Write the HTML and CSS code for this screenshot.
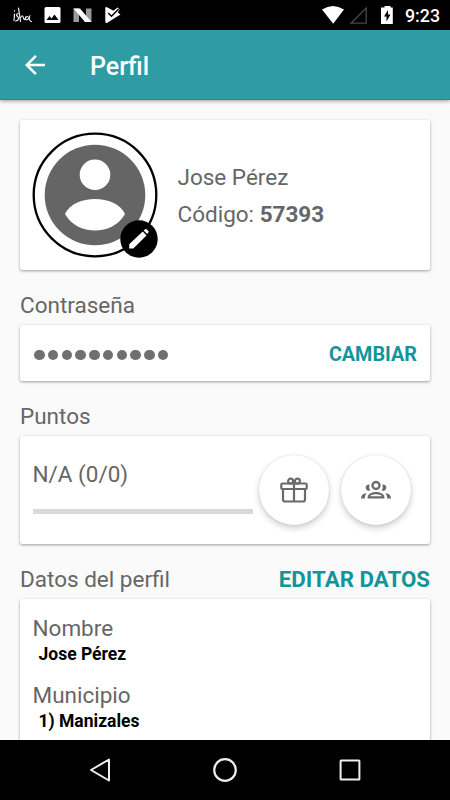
FILE: index.html
```html
<!DOCTYPE html>
<html lang="es">
<head>
  <meta charset="UTF-8">
  <meta name="viewport" content="width=device-width, initial-scale=1.0">
  <title>Perfil</title>
  <link rel="stylesheet" href="styles.css">
</head>
<body>
  <div class="status-bar">
    <svg class="status-left" width="125" height="30" viewBox="0 0 125 30">
      <path fill="none" stroke="#eee" stroke-width="1.2" stroke-linecap="round" d="M14.500 14l-.5 6.500M14.500 10.500v.5M18 13.500c-2.500 1-1.500 2 0 3.500s0 4-2.500 4M18.500 8l2 13.500M20.500 18c1.500-3 2.500-3 3 0 .5 2.500 2 1.500 2.500-1.500M27.500 16.500c-2 .5-3 3.500-1 3.500s2-2.500 3-3.500c-.5 2 0 4.500 2 5"/>
      <path fill="#fff" fill-rule="evenodd" d="M46 7h13q1.500 0 1.500 1.500v13q0 1.500-1.500 1.500H46q-1.500 0-1.500-1.500v-13Q44.500 7 46 7zM46.500 20h12l-4-5.500-3 4-2-2.500z"/>
      <path fill="#999" d="M73.500 8.500H79v13.500h-5.500zM86 8.500h5.500V22H86z"/>
      <path fill="#fff" d="M73.500 8.500H80L91.500 22H85z"/>
      <path fill="#fff" d="M105.300 7.500q.7-.8 1.700-.3l6.500 3.500 4-3.200 2.200 2-2 3 2.800 2-13.200 8.200q-2 .8-2-1.200z"/>
      <path fill="none" stroke="#000" stroke-width="1.500" d="M108.300 13l3.200 3.200 7.200-7.200"/>
    </svg>
    <svg class="status-right" width="80" height="30" viewBox="0 0 80 30">
      <path fill="#fff" d="M2 9.500q11-7 22 0L13.200 23.700z"/>
      <path fill="none" stroke="#484848" stroke-width="1.300" d="M46.200 8v15.200H31z"/>
      <path fill="#fff" d="M62.500 7.500h2V6h6v1.500h2.300V24H61V7.500z"/>
      <path fill="#000" d="M68 10l-4 6.500h2.500v5l4-7H68z"/>
    </svg>
    <span class="clock">9:23</span>
  </div>

  <header class="app-bar">
    <svg class="back" width="20" height="20" viewBox="4 4 16 16">
      <path fill="#fff" d="M20 11H7.830l5.590-5.590L12 4l-8 8 8 8 1.410-1.410L7.830 13H20v-2z"/>
    </svg>
    <h1 class="title">Perfil</h1>
  </header>

  <main class="content">
    <section class="card user-card">
      <div class="avatar">
        <svg width="126" height="126" viewBox="0 0 126 126">
          <circle cx="63" cy="63" r="61.300" fill="#fff" stroke="#000" stroke-width="2.300"/>
          <circle cx="63" cy="63" r="50.300" fill="#656565"/>
          <circle cx="63" cy="42.700" r="15.300" fill="#fff"/>
          <path fill="#fff" d="M33 82C42 62 84 62 93 82C81 104 45 104 33 82z"/>
        </svg>
        <svg class="edit-badge" width="38" height="38" viewBox="0 0 38 38">
          <circle cx="19" cy="19" r="18.700" fill="#000"/>
          <path fill="#fff" d="M9.200 28.500v-4.300L22.700 11.500l3.800 4L13.300 28.500zM23.700 10.500l1.500-1.300q.7-.6 1.400 0l1.800 1.900q.6.700 0 1.400l-1.300 1.500z"/>
        </svg>
      </div>
      <div class="user-info">
        <div>Jose Pérez</div>
        <div>Código: <b>57393</b></div>
      </div>
    </section>

    <div class="section-head">Contraseña</div>
    <section class="card password-card">
      <div class="dots">
        <i></i><i></i><i></i><i></i><i></i><i></i><i></i><i></i><i></i><i></i>
      </div>
      <a class="link">CAMBIAR</a>
    </section>

    <div class="section-head">Puntos</div>
    <section class="card points-card">
      <div class="points">
        <div class="points-text">N/A (0/0)</div>
        <div class="progress"></div>
      </div>
      <div class="round-btn">
        <svg width="28" height="26" viewBox="0 0 28 26" fill="none" stroke="#6a6a6a" stroke-width="2.200">
          <rect x="1.300" y="6.500" width="25.400" height="5.500" rx="1"/>
          <path d="M3 12v10.500q0 2 2 2h18q2 0 2-2V12M14 6v18"/>
          <circle cx="10.600" cy="4.200" r="2.500"/>
          <circle cx="17.400" cy="4.200" r="2.500"/>
        </svg>
      </div>
      <div class="round-btn">
        <svg width="30" height="20" viewBox="0 0 30 20">
          <circle cx="15" cy="5.500" r="3.500" fill="none" stroke="#6a6a6a" stroke-width="2.300"/>
          <path fill="none" stroke="#6a6a6a" stroke-width="2.300" d="M7.700 17.300c0-5.500 14.600-5.500 14.600 0z"/>
          <path fill="#6a6a6a" d="M8.500 4.500a3.200 3.200 0 1 0 .8 6q-1.700-2.500-.8-6zM21.500 4.500a3.200 3.200 0 1 1-.8 6q1.700-2.500.8-6zM0 18.500q0-4.700 5.500-5.300-1.700 2.300-1.700 5.300zM30 18.500q0-4.700-5.500-5.300 1.700 2.300 1.700 5.300z"/>
        </svg>
      </div>
    </section>

    <div class="section-head data-head">
      <span>Datos del perfil</span>
      <a class="link edit-link">EDITAR DATOS</a>
    </div>
    <section class="card data-card">
      <div class="field">
        <div class="label">Nombre</div>
        <div class="value">Jose Pérez</div>
      </div>
      <div class="field">
        <div class="label">Municipio</div>
        <div class="value">1) Manizales</div>
      </div>
    </section>
  </main>

  <nav class="nav-bar">
    <svg width="24" height="26" viewBox="0 0 24 26">
      <path fill="none" stroke="#eee" stroke-width="2" stroke-linejoin="round" d="M21 2.500v21L3 13z"/>
    </svg>
    <svg width="24" height="26" viewBox="0 0 24 26">
      <circle cx="12" cy="13" r="10.800" fill="none" stroke="#eee" stroke-width="2.200"/>
    </svg>
    <svg width="24" height="26" viewBox="0 0 24 26">
      <rect x="2.600" y="3.600" width="18.800" height="18.800" rx=".5" fill="none" stroke="#eee" stroke-width="2"/>
    </svg>
  </nav>
</body>
</html>
```

FILE: styles.css
```css
* {
  box-sizing: border-box;
}
body {
  margin: 0;
  height: 800px;
  display: flex;
  flex-direction: column;
  overflow: hidden;
  background: #fafafa;
  color: #666;
  font-family: Roboto, sans-serif;
  font-size: 22.5px;
}
svg {
  display: block;
  flex: none;
}
.status-bar {
  display: flex;
  flex: none;
  height: 30px;
  background: #000;
  color: #fff;
}
.status-right {
  margin-left: 195px;
}
.clock {
  margin-left: 5px;
  font-size: 17.8px;
  font-weight: 500;
  line-height: 31px;
}
.app-bar {
  display: flex;
  flex: none;
  align-items: center;
  height: 70px;
  padding-left: 25px;
  background: #2e9ca2;
  border-bottom: 1px solid #168f95;
  box-shadow: 0 1px 4px rgba(0, 0, 0, 0.4);
  color: #fff;
  z-index: 1;
}
.title {
  margin: 4px 0 0 45px;
  font-size: 25px;
  font-weight: 500;
  line-height: 30px;
}
.content {
  flex: 1;
  min-height: 0;
  overflow: hidden;
  padding: 20px 20px 0;
}
.card {
  display: flex;
  background: #fff;
  border-radius: 2.5px;
  box-shadow: 0 1px 3px rgba(0, 0, 0, 0.38);
}
.user-card {
  height: 150px;
  padding: 12px;
}
.avatar {
  position: relative;
  width: 126px;
  height: 126px;
}
.edit-badge {
  position: absolute;
  right: 0;
  bottom: 0;
}
.user-info {
  margin-left: 19.5px;
  padding-top: 27px;
  line-height: 37px;
}
.section-head {
  height: 55px;
  padding-top: 20px;
  line-height: 30px;
}
.link {
  color: #12959a;
  font-weight: 700;
}
.password-card {
  align-items: center;
  justify-content: space-between;
  height: 56px;
  padding: 2px 13px 0 14px;
  font-size: 19.8px;
}
.dots {
  display: flex;
  gap: 3.25px;
  margin-top: 2px;
}
.dots i {
  width: 10.5px;
  height: 10.5px;
  border-radius: 50%;
  background: #707070;
}
.points-card {
  height: 108px;
  padding: 18.5px 19px 0 12.5px;
}
.points {
  flex: none;
  width: 220px;
  margin-right: 6.5px;
}
.points-text {
  padding-top: 4px;
  line-height: 30px;
}
.progress {
  height: 5px;
  margin-top: 20px;
  background: #d9d9d9;
}
.round-btn {
  display: flex;
  flex: none;
  align-items: center;
  justify-content: center;
  width: 70px;
  height: 70px;
  margin-right: 12px;
  border-radius: 50%;
  background: #fff;
  box-shadow: 0 3px 6px rgba(0, 0, 0, 0.2), 0 0 2px rgba(0, 0, 0, 0.12);
}
.data-head {
  display: flex;
  justify-content: space-between;
}
.edit-link {
  font-size: 22.3px;
}
.data-card {
  flex-direction: column;
  height: 200px;
  padding: 14px 12.5px;
}
.field {
  flex: none;
  height: 67px;
}
.label {
  line-height: 30px;
}
.value {
  padding: 0.4px 0 0 6px;
  color: #000;
  font-size: 17.5px;
  font-weight: 700;
  line-height: 23px;
}
.nav-bar {
  display: flex;
  flex: none;
  align-items: center;
  justify-content: center;
  gap: 101px;
  height: 60px;
  background: #000;
}
```
